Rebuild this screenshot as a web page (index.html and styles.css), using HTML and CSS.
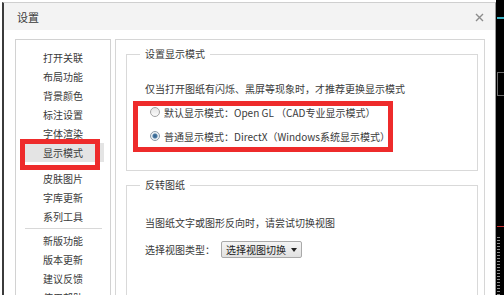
FILE: index.html
```html
<!DOCTYPE html>
<html lang="zh-CN">
<head>
    <meta charset="UTF-8">
    <title>设置</title>
    <link rel="stylesheet" href="styles.css">
</head>
<body>
    <div class="desk">
        <div class="dialog">
            <div class="titlebar">
                <span class="title">设置</span>
                <svg class="close" width="9" height="9" viewBox="0 0 9 9">
                    <path d="M1 1L8 8M8 1L1 8" stroke="#8c8c8c" stroke-width="1.4" fill="none"/>
                </svg>
            </div>
            <div class="body">
                <!-- 左侧菜单 -->
                <ul class="nav">
                    <li>打开关联</li>
                    <li>布局功能</li>
                    <li>背景颜色</li>
                    <li>标注设置</li>
                    <li>字体渲染</li>
                    <li class="active">显示模式</li>
                    <li>皮肤图片</li>
                    <li>字库更新</li>
                    <li>系列工具</li>
                    <li class="sep"></li>
                    <li>新版功能</li>
                    <li>版本更新</li>
                    <li>建议反馈</li>
                    <li>使用帮助</li>
                </ul>

                <div class="main">
                    <div class="group">
                        <div class="group-title">设置显示模式</div>
                        <p class="note">仅当打开图纸有闪烁、黑屏等现象时，才推荐更换显示模式</p>
                        <div class="radios">
                            <label class="radio-row"><span class="radio"></span>默认显示模式：Open GL （CAD专业显示模式）</label>
                            <label class="radio-row"><span class="radio checked"></span>普通显示模式：DirectX（Windows系统显示模式）</label>
                        </div>
                    </div>

                    <div class="group group-last">
                        <div class="group-title">反转图纸</div>
                        <p class="note note-wide">当图纸文字或图形反向时，请尝试切换视图</p>
                        <div class="view-row">
                            <span>选择视图类型：</span>
                            <div class="select">选择视图切换<span class="caret"></span></div>
                        </div>
                    </div>
                </div>
            </div>
        </div>

        <!-- 背后的CAD窗口 -->
        <div class="backdrop">
            <div class="cad-cyan"></div>
            <div class="cad-box"></div>
            <div class="cad-red"></div>
            <div class="cad-dots"></div>
        </div>
    </div>
</body>
</html>
```

FILE: styles.css
```css
*, *::before, *::after {
    box-sizing: border-box;
}
body {
    margin: 0;
    font-family: "Noto Sans CJK SC", sans-serif;
    font-size: 10px;
    color: #3a3a3a;
    background: #fff;
    overflow: hidden;
}
.desk {
    display: flex;
    width: 504px;
    height: 295px;
    overflow: hidden;
}
.dialog {
    width: 494px;
    height: 320px;
    margin: 2px 0 0 2px;
    border-top: 1px solid #cfcfcf;
    border-left: 2px solid #3b3b3b;
    border-right: 1px solid #9a9a9a;
    background: #fff;
}
.titlebar {
    height: 27px;
    background: #f3f3f3;
    display: flex;
    align-items: center;
    justify-content: space-between;
    padding: 0 11px 0 13px;
}
.title {
    font-size: 11px;
    line-height: 16px;
}
.close {
    margin-top: 1px;
}
.body {
    display: flex;
    gap: 4px;
    padding: 9px 10px 0 11px;
}
/* 左侧菜单 */
.nav {
    width: 96px;
    height: 290px;
    margin: 0;
    padding: 8px 0 0;
    list-style: none;
    border: 1px solid #d2d2d2;
}
.nav li {
    height: 19px;
    line-height: 19px;
    text-align: center;
}
.nav li.active {
    position: relative;
    margin: 0 6px 7px;
    background: #e4e4e4;
}
.nav li.active::after {
    content: "";
    position: absolute;
    left: -2px;
    top: -4px;
    width: 80px;
    height: 31px;
    border: 5px solid #ee2b2b;
}
.nav li.sep {
    height: 1px;
    margin: 2px 8px 2px 9px;
    background: #d8d8d8;
}
/* 右侧内容 */
.main {
    flex: 1;
    height: 290px;
    border: 1px solid #d6d6d6;
    padding: 14px 6px 0 10px;
}
.group {
    border: 1px solid #d9d9d9;
    padding: 0 18px 22px;
}
.group + .group {
    margin-top: 14px;
}
.group-last {
    height: 120px;
}
.group-title {
    display: table;
    margin: -9px 0 0 -5px;
    padding: 0 5px;
    background: #fff;
    line-height: 16px;
}
.note {
    margin: 19px 0 3px;
    line-height: 16px;
}
.note-wide {
    margin-top: 22px;
}
.radios {
    position: relative;
}
.radios::after {
    content: "";
    position: absolute;
    left: -12px;
    top: 1px;
    width: 260px;
    height: 51px;
    border: 5px solid #ee2b2b;
}
.radio-row {
    display: flex;
    align-items: center;
    height: 24px;
    padding-left: 5px;
    white-space: nowrap;
}
.radio {
    width: 10px;
    height: 10px;
    margin-right: 4px;
    border-radius: 50%;
    border: 1px solid #a3a3a3;
    background: linear-gradient(#e4e4e4, #fbfbfb);
}
.radio.checked {
    border-color: #8a9aa8;
    background: radial-gradient(circle, #2f5f8a 0, #4b7aa3 2px, #e2eaf1 3px, #f6f6f6 4px);
}
.view-row {
    display: flex;
    align-items: center;
    height: 17px;
    margin-top: 10px;
}
.select {
    display: flex;
    align-items: center;
    justify-content: space-between;
    width: 81px;
    height: 17px;
    margin-left: 6px;
    padding-left: 4px;
    border: 1px solid #a9a9a9;
    border-radius: 2px;
    background: linear-gradient(#f5f5f5, #e1e1e1);
    line-height: 15px;
    white-space: nowrap;
    color: #222;
}
.caret {
    width: 0;
    height: 0;
    margin-right: 4px;
    border-left: 3px solid transparent;
    border-right: 3px solid transparent;
    border-top: 4px solid #222;
}
/* 背后的CAD窗口 */
.backdrop {
    position: relative;
    flex: 1;
    background: #000;
}
.cad-cyan {
    position: absolute;
    left: 1px;
    top: 17px;
    width: 8px;
    height: 2px;
    background: #3ab4c6;
}
.cad-box {
    position: absolute;
    left: 1px;
    top: 72px;
    width: 10px;
    height: 24px;
    border: 1px solid #6e6e6e;
}
.cad-red {
    position: absolute;
    left: 1px;
    top: 226px;
    width: 8px;
    height: 1px;
    background: #c83030;
}
.cad-dots {
    position: absolute;
    left: 1px;
    top: 237px;
    width: 3px;
    height: 58px;
    background: repeating-linear-gradient(#8a8a8a 0 1px, transparent 1px 3px);
}
```
